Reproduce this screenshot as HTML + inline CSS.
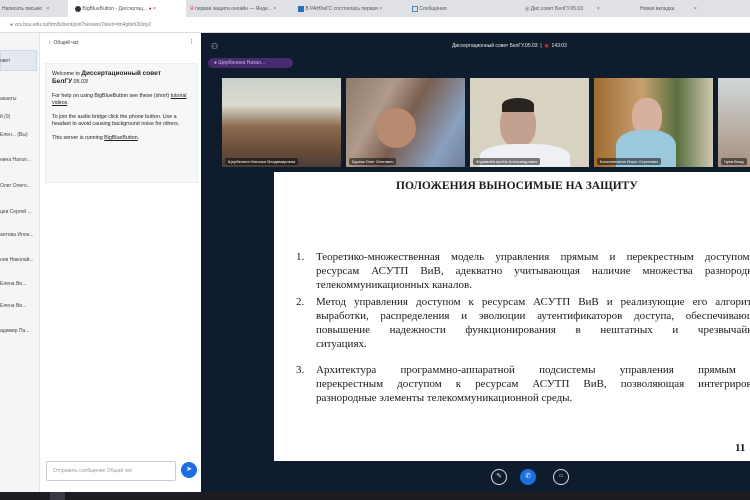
<!DOCTYPE html>
<html><head><meta charset="utf-8"><style>
*{margin:0;padding:0;box-sizing:border-box}
body{width:750px;height:500px;overflow:hidden;font-family:"Liberation Sans",sans-serif;background:#fff;position:relative}
.a{position:absolute}
.tab{position:absolute;top:3px;height:12px;font-size:5px;color:#555;line-height:12px;white-space:nowrap}
.t{font-size:5px;color:#444;white-space:nowrap}
.vid{position:absolute;top:78px;height:89px;width:119px;overflow:hidden}
.nm{position:absolute;bottom:2px;left:3px;font-size:4px;color:#fff;background:rgba(0,0,0,.5);padding:1px 3px;border-radius:2px;white-space:nowrap}
.sl{font-family:"Liberation Serif",serif;font-size:11px;color:#1a1a1a;line-height:14px}
.ln{position:absolute;left:316px;width:450px;height:14px;white-space:nowrap;text-align:justify;text-align-last:justify;font-family:"Liberation Serif",serif;font-size:11px;color:#1a1a1a;line-height:14px}
.ln.e{text-align-last:left}
.n{position:absolute;left:296px;font-family:"Liberation Serif",serif;font-size:11px;color:#1a1a1a;line-height:14px}
</style></head><body>
<div class="a" style="left:0;top:0;width:750px;height:17px;background:#dfe1e5"></div>
<div class="a" style="left:68px;top:0;width:118px;height:17px;background:#fff"></div>
<div class="tab" style="left:2px">Написать письмо &nbsp; ×</div>
<div class="tab" style="left:75px"><span style="display:inline-block;width:6px;height:6px;border-radius:50%;background:#334;vertical-align:middle"></span> BigBlueButton - Диссертац... <span style="color:#d22">●</span> ×</div>
<div class="tab" style="left:190px"><span style="color:#e33">Я</span> первая защита онлайн — Янде... ×</div>
<div class="tab" style="left:298px"><span style="display:inline-block;width:6px;height:6px;background:#2a6ebd;vertical-align:middle"></span> В РАНХиГС состоялась первая ×</div>
<div class="tab" style="left:412px"><span style="display:inline-block;width:6px;height:6px;border:1px solid #48b;vertical-align:middle"></span> Сообщения</div>
<div class="tab" style="left:525px">◎ Дис.совет БелГУ.05.03 &nbsp;&nbsp;&nbsp;&nbsp;&nbsp;&nbsp;&nbsp;&nbsp; ×</div>
<div class="tab" style="left:640px">Новая вкладка &nbsp;&nbsp;&nbsp;&nbsp;&nbsp;&nbsp;&nbsp;&nbsp;&nbsp;&nbsp;&nbsp;&nbsp; ×</div>
<div class="a" style="left:0;top:17px;width:750px;height:16px;background:#fff;border-bottom:1px solid #ddd"></div>
<div class="a t" style="left:10px;top:22px;color:#777">● vcs.bsu.edu.ru/html5client/join?sessionToken=lm4pbkh30xty2</div>
<div class="a" style="left:0;top:33px;width:40px;height:459px;background:#f4f5f7;border-right:1px solid #e4e6ea"></div>
<div class="a" style="left:0;top:50px;width:37px;height:21px;background:#e4e9f0;border:1px solid #cfd8e3"></div>
<div class="a t" style="left:0;top:58px">овет</div>
<div class="a t" style="left:0;top:96px">аканты</div>
<div class="a t" style="left:0;top:114px">й (9)</div>
<div class="a t" style="left:0;top:132px">Елен... (Вы)</div>
<div class="a t" style="left:0;top:157px">нина Натал...</div>
<div class="a t" style="left:0;top:183px">Олег Олего...</div>
<div class="a t" style="left:0;top:209px">цев Сергей ...</div>
<div class="a t" style="left:0;top:232px">антова Илон...</div>
<div class="a t" style="left:0;top:257px">нов Николай...</div>
<div class="a t" style="left:0;top:281px">Елена Ви...</div>
<div class="a t" style="left:0;top:303px">Елена Ви...</div>
<div class="a t" style="left:0;top:328px">адимир Па...</div>
<div class="a t" style="left:49px;top:40px">‹ &nbsp;Общий чат</div>
<div class="a t" style="left:189px;top:39px;font-weight:bold">⋮</div>
<div class="a" style="left:45px;top:63px;width:153px;height:120px;background:#f6f7f9;border:1px solid #eceef1"></div>
<div class="a" style="left:52px;top:70px;width:142px;font-size:5.3px;line-height:7px;color:#222">
Welcome to <b style="font-size:6.5px">Диссертационный совет БелГУ</b>.05.03!<br><br>
For help on using BigBlueButton see these (short) <u>tutorial videos</u>.<br><br>
To join the audio bridge click the phone button. Use a headset to avoid causing background noise for others.<br><br>
This server is running <u>BigBlueButton</u>.</div>
<div class="a" style="left:46px;top:461px;width:130px;height:20px;border:1px solid #ccc;border-radius:2px;background:#fff"></div>
<div class="a t" style="left:53px;top:468px;color:#999">Отправить сообщение Общий чат</div>
<div class="a" style="left:181px;top:462px;width:16px;height:16px;border-radius:50%;background:#1d6fe0;color:#fff;font-size:7px;text-align:center;line-height:16px">➤</div>
<div class="a" style="left:201px;top:33px;width:549px;height:459px;background:#0f1c2e"></div>
<div class="a" style="left:211px;top:42px;color:#dde;font-size:8px">⚇</div>
<div class="a" style="left:208px;top:58px;width:85px;height:10px;border-radius:5px;background:#4a2a6e"></div>
<div class="a" style="left:214px;top:60px;font-size:5px;color:#c9b6e6">● Щербенина Натал...</div>
<div class="a" style="left:452px;top:43px;font-size:5px;color:#eee">Диссертационный совет БелГУ.05.03 &nbsp;|&nbsp; <span style="color:#e33">◉</span> &nbsp;143:03</div>
<div class="vid" style="left:222px;background:linear-gradient(#c9cfc8 0,#dcdcd0 30%,#8a6a50 55%,#6b4e3a 80%,#4a3f3a)">
 <div class="nm">Щербенина Наталья Владимировна</div></div>
<div class="vid" style="left:346px;background:linear-gradient(120deg,#8f7a6a,#b09a8a 30%,#7a5e50 50%,#8aa0c0 80%,#6d7f9a)">
 <div class="a" style="left:30px;top:30px;width:40px;height:40px;border-radius:50%;background:#b88a70"></div>
 <div class="nm">Бурзак Олег Олегович</div></div>
<div class="vid" style="left:470px;background:#d8d2c0">
 <div class="a" style="left:30px;top:25px;width:36px;height:44px;border-radius:45%;background:#c4a090"></div>
 <div class="a" style="left:32px;top:20px;width:32px;height:14px;border-radius:50% 50% 0 0;background:#2a2420"></div>
 <div class="a" style="left:10px;top:66px;width:90px;height:30px;border-radius:40% 40% 0 0;background:#eef0f4"></div>
 <div class="nm">Журавлёв Артём Александрович</div></div>
<div class="vid" style="left:594px;background:linear-gradient(90deg,#a06a30,#c8a070 40%,#5a7040 70%,#d0c8b0)">
 <div class="a" style="left:38px;top:20px;width:30px;height:38px;border-radius:45%;background:#d8b0a0"></div>
 <div class="a" style="left:22px;top:52px;width:60px;height:40px;border-radius:40% 40% 0 0;background:#9cc8dc"></div>
 <div class="nm">Константинов Игорь Сергеевич</div></div>
<div class="vid" style="left:718px;width:32px;background:linear-gradient(#d0d8d8,#a89080)">
 <div class="nm">Чуев Влад</div></div>
<div class="a" style="left:274px;top:172px;width:476px;height:289px;background:#fff"></div>
<div class="a sl" style="left:396px;top:179px;font-weight:bold;font-size:11.5px">ПОЛОЖЕНИЯ ВЫНОСИМЫЕ НА ЗАЩИТУ</div>
<div class="n" style="top:250px">1.</div>
<div class="ln" style="top:250px">Теоретико-множественная модель управления прямым и перекрестным доступом к</div>
<div class="ln" style="top:264px">ресурсам АСУТП ВиВ, адекватно учитывающая наличие множества разнородных</div>
<div class="ln e" style="top:278px">телекоммуникационных каналов.</div>
<div class="n" style="top:295px">2.</div>
<div class="ln" style="top:295px">Метод управления доступом к ресурсам АСУТП ВиВ и реализующие его алгоритмы</div>
<div class="ln" style="top:309px">выработки, распределения и эволюции аутентификаторов доступа, обеспечивающие</div>
<div class="ln" style="top:323px">повышение надежности функционирования в нештатных и чрезвычайных</div>
<div class="ln e" style="top:337px">ситуациях.</div>
<div class="n" style="top:363px">3.</div>
<div class="ln" style="top:363px">Архитектура программно-аппаратной подсистемы управления прямым и</div>
<div class="ln" style="top:377px">перекрестным доступом к ресурсам АСУТП ВиВ, позволяющая интегрировать</div>
<div class="ln e" style="top:391px">разнородные элементы телекоммуникационной среды.</div>
<div class="a sl" style="left:735px;top:441px;font-weight:bold">11</div>
<div class="a" style="left:491px;top:469px;width:16px;height:16px;border-radius:50%;border:1.5px solid #ddd;color:#ddd;font-size:7px;text-align:center;line-height:13px">✎</div>
<div class="a" style="left:520px;top:469px;width:16px;height:16px;border-radius:50%;background:#1d6fe0;color:#fff;font-size:7px;text-align:center;line-height:16px">✆</div>
<div class="a" style="left:553px;top:469px;width:16px;height:16px;border-radius:50%;border:1.5px solid #ddd;color:#ddd;font-size:5px;text-align:center;line-height:13px">▭</div>
<div class="a" style="left:0;top:492px;width:750px;height:8px;background:#1c1c22"></div>
<div class="a" style="left:50px;top:492px;width:15px;height:8px;background:#3a3a44"></div>
</body></html>
